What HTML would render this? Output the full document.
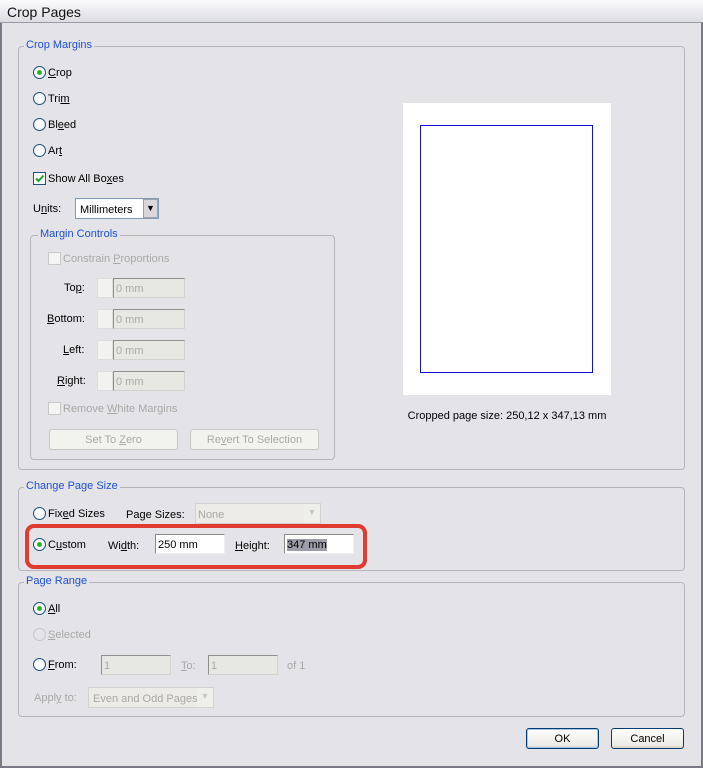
<!DOCTYPE html>
<html><head><style>
*{box-sizing:border-box;margin:0;padding:0}
body{width:703px;height:768px;background:#e4e3e8;font:11px "Liberation Sans",sans-serif;color:#000;position:relative;overflow:hidden}
.a{position:absolute}
.title{left:0;top:0;width:703px;height:23px;background:linear-gradient(#fbfbfc,#dcdce3);border-bottom:1px solid #9a9aa6;font-size:14px;padding:4px 0 0 7px;color:#111}
.frame{left:0;top:23px;width:703px;height:745px;border:2px solid #7a7a86;border-top:none}
.grp{border:1px solid #b6b5bc;border-radius:4px}
.leg{background:#e4e3e8;color:#1d4fd8;padding:0 2px;font-size:11px}
.rad{width:13px;height:13px;border:1px solid #1c5180;border-radius:50%;background:radial-gradient(#fff 40%,#dcdcd6)}
.rad.on::after{content:"";position:absolute;left:3px;top:3px;width:5px;height:5px;border-radius:50%;background:#29b52a}
.rad.dis{border-color:#c9c8c4;background:#e4e3e8}
.chk{width:13px;height:13px;border:1px solid #1c5180;background:#fff}
.chk.dis{border-color:#c9c8c4;background:#f4f4f4}
.lbl{font-size:11px}
.dis-t{color:#a9a8a6}
.inp{height:20px;border:1px solid #d2d2ce;border-top-color:#8f8f8b;border-left-color:#8f8f8b;background:#e7e7e4;font-size:11px;padding:4px 2px;color:#a9a8a6}
.inp.en{background:#fff;color:#000;border-color:#7f9db9}
.btn{height:21px;border:1px solid #c9c8c4;border-radius:3px;background:#f2f2ef;text-align:center;font-size:11px;padding-top:4px}
.btn.en{border-color:#003c74;background:linear-gradient(#fff,#ecebe6 85%,#d6d0c5);color:#000}
u{text-decoration:underline}
</style></head><body>
<div class="a title">Crop Pages</div>
<div class="a frame"></div>

<div class="a grp" style="left:18px;top:46px;width:667px;height:424px"></div>
<div class="a leg" style="left:24px;top:39px">Crop Margins</div>
<div class="a rad on" style="left:33px;top:66px"></div><div class="a lbl" style="left:48px;top:67px"><u>C</u>rop</div>
<div class="a rad" style="left:33px;top:92px"></div><div class="a lbl" style="left:48px;top:93px">Tri<u>m</u></div>
<div class="a rad" style="left:33px;top:118px"></div><div class="a lbl" style="left:48px;top:119px">Bl<u>e</u>ed</div>
<div class="a rad" style="left:33px;top:144px"></div><div class="a lbl" style="left:48px;top:145px">Ar<u>t</u></div>
<div class="a chk" style="left:33px;top:172px"><svg width="11" height="11" style="position:absolute;left:0;top:0"><path d="M2 5.5l2.5 2.5 5-5.5" stroke="#21a121" stroke-width="2" fill="none"/></svg></div>
<div class="a lbl" style="left:48px;top:173px">Show All Bo<u>x</u>es</div>
<div class="a lbl" style="left:33px;top:203px">U<u>n</u>its:</div>
<div class="a inp en" style="left:75px;top:198px;width:84px;height:21px;padding:5px 4px">Millimeters</div>
<div class="a" style="left:143px;top:199px;width:15px;height:19px;background:#d8d8dc;border:1px solid #a0a0a8;text-align:center;font-size:9px;padding-top:3px">&#9660;</div>

<div class="a grp" style="left:30px;top:235px;width:305px;height:225px"></div>
<div class="a leg" style="left:38px;top:228px">Margin Controls</div>
<div class="a chk dis" style="left:48px;top:252px"></div><div class="a lbl dis-t" style="left:63px;top:253px">Constrain <u>P</u>roportions</div>

<div class="a lbl" style="left:64px;top:282px">To<u>p</u>:</div>
<div class="a" style="left:97px;top:278px;width:16px;height:20px;background:#f2f2f0;border:1px solid #ddd"></div>
<div class="a inp" style="left:113px;top:278px;width:72px">0 mm</div>
<div class="a lbl" style="left:47px;top:313px"><u>B</u>ottom:</div>
<div class="a" style="left:97px;top:309px;width:16px;height:20px;background:#f2f2f0;border:1px solid #ddd"></div>
<div class="a inp" style="left:113px;top:309px;width:72px">0 mm</div>
<div class="a lbl" style="left:63px;top:344px"><u>L</u>eft:</div>
<div class="a" style="left:97px;top:340px;width:16px;height:20px;background:#f2f2f0;border:1px solid #ddd"></div>
<div class="a inp" style="left:113px;top:340px;width:72px">0 mm</div>
<div class="a lbl" style="left:57px;top:375px"><u>R</u>ight:</div>
<div class="a" style="left:97px;top:371px;width:16px;height:20px;background:#f2f2f0;border:1px solid #ddd"></div>
<div class="a inp" style="left:113px;top:371px;width:72px">0 mm</div>

<div class="a chk dis" style="left:48px;top:402px"></div><div class="a lbl dis-t" style="left:63px;top:403px">Remove <u>W</u>hite Margins</div>
<div class="a btn dis-t" style="left:49px;top:429px;width:129px">Set To <u>Z</u>ero</div>
<div class="a btn dis-t" style="left:190px;top:429px;width:129px">Re<u>v</u>ert To Selection</div>

<div class="a" style="left:403px;top:103px;width:208px;height:292px;background:#fff"></div>
<div class="a" style="left:420px;top:125px;width:173px;height:248px;border:1px solid #1010d8"></div>
<div class="a" style="left:380px;top:410px;width:254px;text-align:center;font-size:11px">Cropped page size: 250,12 x 347,13 mm</div>

<div class="a grp" style="left:18px;top:487px;width:667px;height:84px"></div>
<div class="a leg" style="left:24px;top:480px">Change Page Size</div>
<div class="a rad" style="left:33px;top:507px"></div><div class="a lbl" style="left:48px;top:508px">Fix<u>e</u>d Sizes</div>
<div class="a lbl" style="left:126px;top:509px">Pa<u>g</u>e Sizes:</div>
<div class="a inp" style="left:195px;top:503px;width:126px;height:21px;border-color:#d2d2ce;background:#ecebe8;padding-top:5px">None</div>
<div class="a" style="left:304px;top:504px;width:16px;height:19px;background:#efefec;color:#c8c8c4;text-align:center;font-size:9px;padding-top:3px">&#9660;</div>
<div class="a rad on" style="left:33px;top:538px"></div><div class="a lbl" style="left:48px;top:539px">C<u>u</u>stom</div>
<div class="a lbl" style="left:108px;top:540px">Wi<u>d</u>th:</div>
<div class="a inp en" style="left:155px;top:534px;width:70px;border-color:#8a8a86;border-right-color:#eee;border-bottom-color:#eee">250 mm</div>
<div class="a lbl" style="left:235px;top:540px"><u>H</u>eight:</div>
<div class="a inp en" style="left:284px;top:534px;width:70px;border-color:#8a8a86;border-right-color:#eee;border-bottom-color:#eee"><span style="background:#9c9da9;color:#000">347 mm</span></div>
<div class="a" style="left:25px;top:524px;width:342px;height:45px;border:4px solid #e03b30;border-radius:9px"></div>

<div class="a grp" style="left:18px;top:582px;width:667px;height:135px"></div>
<div class="a leg" style="left:24px;top:575px">Page Range</div>
<div class="a rad on" style="left:33px;top:602px"></div><div class="a lbl" style="left:48px;top:603px"><u>A</u>ll</div>
<div class="a rad dis" style="left:33px;top:628px"></div><div class="a lbl dis-t" style="left:48px;top:629px"><u>S</u>elected</div>
<div class="a rad" style="left:33px;top:658px"></div><div class="a lbl" style="left:48px;top:659px"><u>F</u>rom:</div>
<div class="a inp" style="left:101px;top:655px;width:70px">1</div>
<div class="a lbl dis-t" style="left:181px;top:660px"><u>T</u>o:</div>
<div class="a inp" style="left:208px;top:655px;width:70px">1</div>
<div class="a lbl dis-t" style="left:287px;top:660px">of 1</div>
<div class="a lbl dis-t" style="left:34px;top:692px">Appl<u>y</u> to:</div>
<div class="a inp" style="left:88px;top:687px;width:126px;height:21px;border-color:#d2d2ce;background:#ecebe8;padding:5px 4px">Even and Odd Pages</div>
<div class="a" style="left:197px;top:688px;width:16px;height:19px;background:#efefec;color:#c8c8c4;text-align:center;font-size:9px;padding-top:3px">&#9660;</div>

<div class="a btn en" style="left:526px;top:728px;width:73px;box-shadow:inset 0 0 0 1px #a8c4ee">OK</div>
<div class="a btn en" style="left:611px;top:728px;width:73px">Cancel</div>
</body></html>
